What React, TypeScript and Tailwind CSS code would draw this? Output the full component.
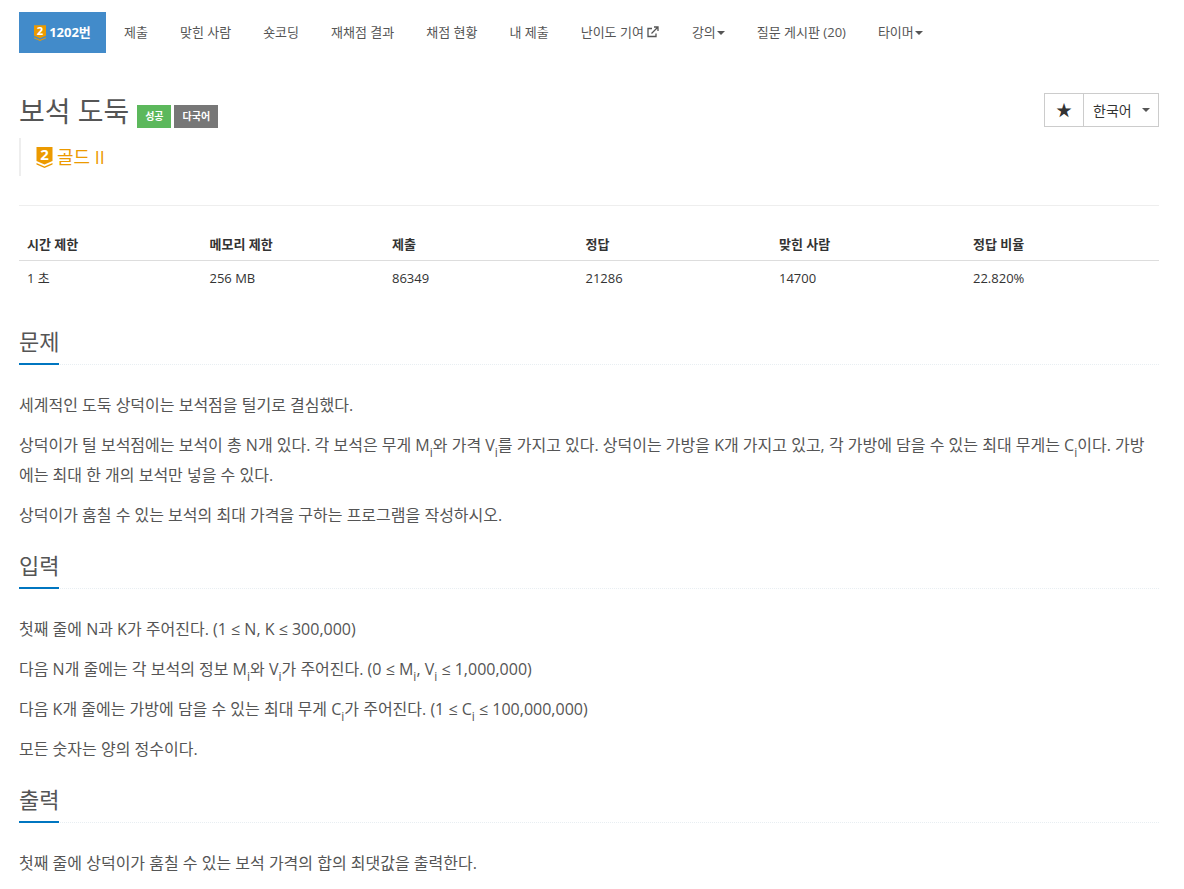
import React from "react";

const font = "font-['Open_Sans','Noto_Sans_CJK_KR',sans-serif]";

function Tier({ className }: { className: string }) {
  return (
    <svg viewBox="0 0 16 21" className={className}>
      <path d="M0 0H16V14L8 17.5L0 14Z" fill="#ec9a00" />
      <path d="M0 16L8 19.5L16 16V17.5L8 21L0 17.5Z" fill="#ec9a00" />
      <text x="8" y="13" textAnchor="middle" fontSize="15" fontWeight="700" fill="#fff" fontFamily="'Open Sans',sans-serif">2</text>
    </svg>
  );
}

function Caret({ className = "" }: { className?: string }) {
  return <span className={`inline-block w-0 h-0 ml-[1px] border-x-[4px] border-x-transparent border-t-[4px] border-t-[#555] align-middle ${className}`} />;
}

function Sub({ children }: { children: React.ReactNode }) {
  return <sub className="text-[12px] leading-none align-[-3px]">{children}</sub>;
}

function Section({ title, children }: { title: string; children: React.ReactNode }) {
  return (
    <section>
      <div className="relative h-[41px] border-b border-dotted border-b-[#e8eef2]">
        <h2 className="text-[22px] leading-[30px] text-[#555] pt-[2px] m-0">{title}</h2>
        <div className="absolute left-0 bottom-[-1px] w-10 h-[2px] bg-[#0076c0]" />
      </div>
      <div className="pt-[25px] text-[16px] leading-[30px] text-[#555] flex flex-col gap-[10px]">{children}</div>
    </section>
  );
}

const navs = ["제출", "맞힌 사람", "숏코딩", "재채점 결과", "채점 현황", "내 제출"];
const cols = ["w-[182.5px]", "w-[182.5px]", "w-[193.5px]", "w-[193.5px]", "w-[194px]", "flex-1"];
const heads = ["시간 제한", "메모리 제한", "제출", "정답", "맞힌 사람", "정답 비율"];
const vals = ["1 초", "256 MB", "86349", "21286", "14700", "22.820%"];

export default function App() {
  return (
    <div className={`${font} w-[1184px] h-[889px] overflow-hidden bg-white pl-[19px] pr-[25px] pt-3 box-border`}>
      <nav className="flex h-[41px] items-center text-[13px] text-[#555]">
        <div className="w-[87px] h-[41px] bg-[#428bca] text-white font-bold text-[13px] flex items-center justify-center gap-[3px]">
          <Tier className="w-3 h-4" />
          <span>1202번</span>
        </div>
        <div className="flex ml-[2px]">
          {navs.map((n) => (
            <span key={n} className="px-4 whitespace-nowrap">{n}</span>
          ))}
          <span className="px-4 whitespace-nowrap flex items-center gap-[3px]">
            난이도 기여
            <svg viewBox="0 0 12 12" className="w-[12px] h-[12px] mb-[2px] mr-[1px]" fill="none" stroke="#555" strokeWidth="1.3">
              <path d="M9 7.5V10.5H1V2.5H5" />
              <path d="M4.5 7.5L10.5 1.5M7 1H11V5" />
            </svg>
          </span>
          <span className="px-4 whitespace-nowrap">강의<Caret /></span>
          <span className="px-4 whitespace-nowrap">질문 게시판 (20)</span>
          <span className="px-4 whitespace-nowrap">타이머<Caret /></span>
        </div>
      </nav>

      <header className="flex justify-between mt-[40px] h-[34px]">
        <div className="flex items-end">
          <h1 className="text-[28px] leading-[34px] text-[#555] m-0 font-normal translate-y-[1px]">보석 도둑</h1>
          <span className="ml-2 mb-[-1px] w-[34px] h-[23px] bg-[#5cb85c] text-white text-[10px] font-bold flex items-center justify-center">성공</span>
          <span className="ml-[3px] mb-[-1px] w-[44px] h-[23px] bg-[#777] text-white text-[10px] font-bold flex items-center justify-center">다국어</span>
        </div>
        <div className="flex h-[34px] border border-[#ccc] text-[14px] text-[#333]">
          <span className="w-[39px] border-r border-r-[#ccc] flex items-center justify-center text-[16px]">★</span>
          <span className="w-[74px] flex items-center pl-[9px] gap-[9px]">한국어<Caret className="border-t-[#333]" /></span>
        </div>
      </header>

      <div className="mt-[11px] h-[38px] border-l-[2px] border-l-[#eee] pl-[15px] flex items-center gap-[4px] text-[#ec9a00] text-[18px]">
        <Tier className="w-[17px] h-[21px]" />
        <span>골드 II</span>
      </div>

      <div className="mt-[29px] border-t border-t-[#eee]" />

      <div className="mt-[20px] text-[13px] text-[#333]">
        <div className="flex h-[35px] border-b-[1.5px] border-b-[#ddd] items-center font-bold pt-[4px]">
          {heads.map((h, i) => (
            <div key={h} className={`${cols[i]} px-2`}>{h}</div>
          ))}
        </div>
        <div className="flex h-[36px] items-center">
          {vals.map((v, i) => (
            <div key={v} className={`${cols[i]} px-2`}>{v}</div>
          ))}
        </div>
      </div>

      <div className="mt-[27px] flex flex-col gap-[18px]">
        <Section title="문제">
          <p>세계적인 도둑 상덕이는 보석점을 털기로 결심했다.</p>
          <p>상덕이가 털 보석점에는 보석이 총 N개 있다. 각 보석은 무게 M<Sub>i</Sub>와 가격 V<Sub>i</Sub>를 가지고 있다. 상덕이는 가방을 K개 가지고 있고, 각 가방에 담을 수 있는 최대 무게는 C<Sub>i</Sub>이다. 가방에는 최대 한 개의 보석만 넣을 수 있다.</p>
          <p>상덕이가 훔칠 수 있는 보석의 최대 가격을 구하는 프로그램을 작성하시오.</p>
        </Section>
        <Section title="입력">
          <p>첫째 줄에 N과 K가 주어진다. (1 ≤ N, K ≤ 300,000)</p>
          <p>다음 N개 줄에는 각 보석의 정보 M<Sub>i</Sub>와 V<Sub>i</Sub>가 주어진다. (0 ≤ M<Sub>i</Sub>, V<Sub>i</Sub> ≤ 1,000,000)</p>
          <p>다음 K개 줄에는 가방에 담을 수 있는 최대 무게 C<Sub>i</Sub>가 주어진다. (1 ≤ C<Sub>i</Sub> ≤ 100,000,000)</p>
          <p>모든 숫자는 양의 정수이다.</p>
        </Section>
        <Section title="출력">
          <p>첫째 줄에 상덕이가 훔칠 수 있는 보석 가격의 합의 최댓값을 출력한다.</p>
        </Section>
      </div>
    </div>
  );
}
